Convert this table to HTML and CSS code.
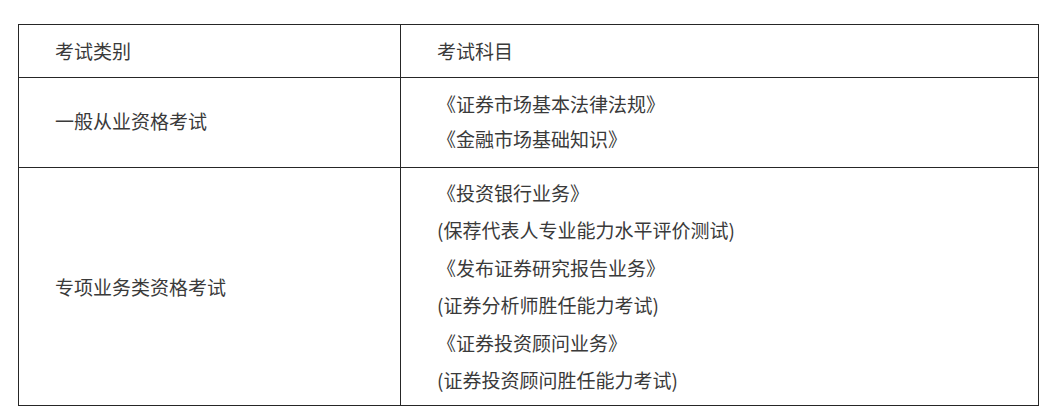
FILE: index.html
```html
<!DOCTYPE html>
<html lang="zh-CN">
<head>
<meta charset="utf-8">
<title>考试类别</title>
<link rel="stylesheet" href="styles.css">
</head>
<body>
<table class="exam-table">
  <colgroup>
    <col class="col-cat">
    <col class="col-subj">
  </colgroup>
  <tr class="head-row">
    <td class="cell">考试类别</td>
    <td class="cell">考试科目</td>
  </tr>
  <tr class="row-general">
    <td class="cell">一般从业资格考试</td>
    <td class="cell">
      <div class="line">《证券市场基本法律法规》</div>
      <div class="line">《金融市场基础知识》</div>
    </td>
  </tr>
  <tr class="row-special">
    <td class="cell">专项业务类资格考试</td>
    <td class="cell">
      <div class="line">《投资银行业务》</div>
      <div class="line">(保荐代表人专业能力水平评价测试)</div>
      <div class="line">《发布证券研究报告业务》</div>
      <div class="line">(证券分析师胜任能力考试)</div>
      <div class="line">《证券投资顾问业务》</div>
      <div class="line">(证券投资顾问胜任能力考试)</div>
    </td>
  </tr>
</table>
</body>
</html>
```

FILE: styles.css
```css
html, body {
  margin: 0;
  padding: 0;
  background: #ffffff;
}

body {
  padding: 24px 0 0 18px;
  font-family: "Noto Sans CJK SC", "Liberation Sans", sans-serif;
  font-size: 19px;
  color: #3a3a3a;
}

.exam-table {
  border-collapse: collapse;
  width: 1021px;
  table-layout: fixed;
}

.col-cat {
  width: 382px;
}

.cell {
  border: 1px solid #262626;
  padding: 7px 0 7px 36px;
  line-height: 37.4px;
  vertical-align: middle;
  text-align: left;
  white-space: nowrap;
}

.head-row .cell {
  height: 38px;
}

.row-general .cell {
  height: 75px;
  padding-top: 5px;
  padding-bottom: 9px;
}

.row-general .line {
  line-height: 35px;
}

.row-special .cell {
  padding-top: 6px;
  padding-bottom: 7px;
}

.line {
  display: block;
}
```
